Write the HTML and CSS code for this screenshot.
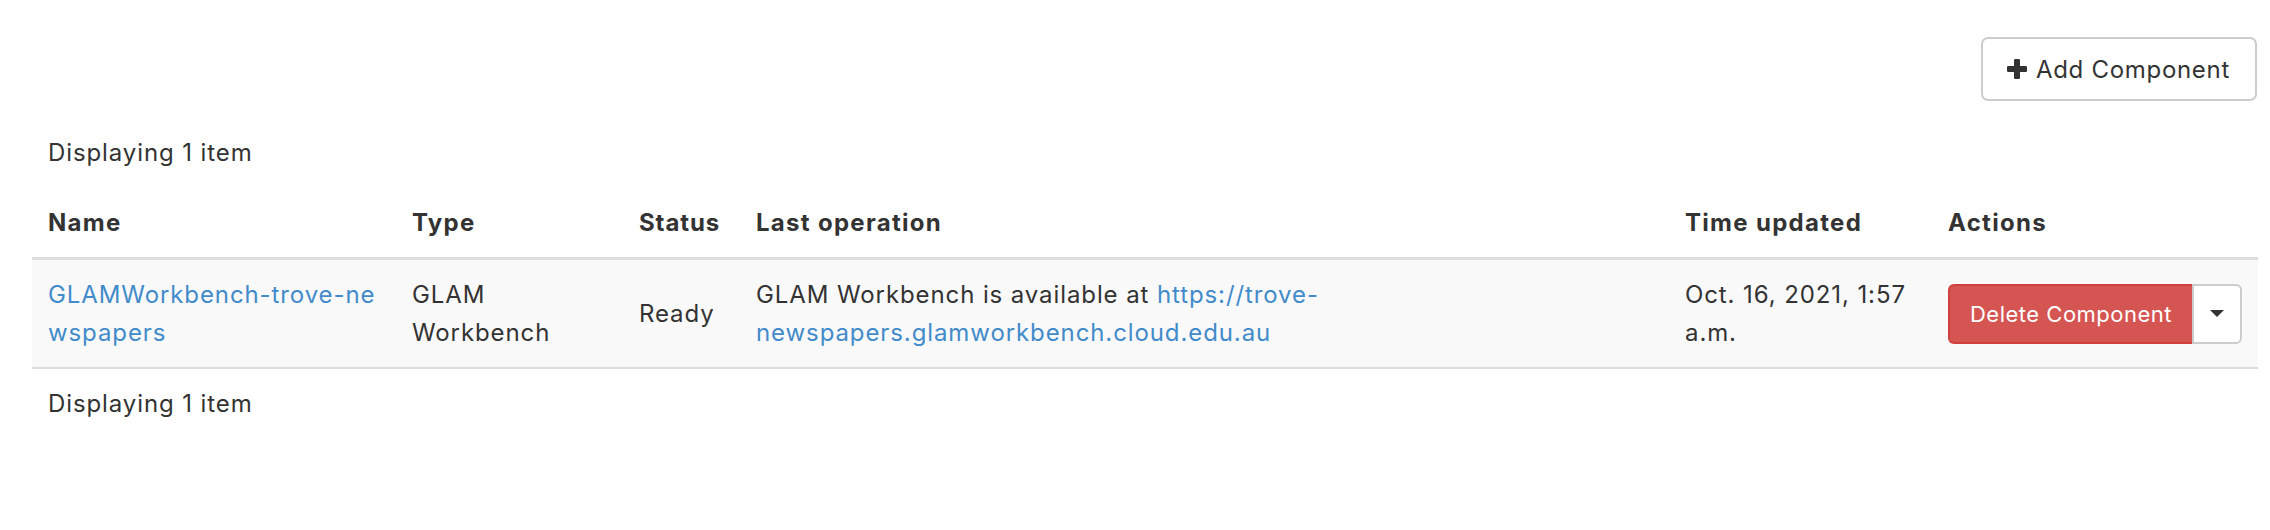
FILE: index.html
```html
<!DOCTYPE html>
<html lang="en">
<head>
<meta charset="utf-8">
<title>Components</title>
<link rel="stylesheet" href="styles.css">
</head>
<body>
<div class="page">
  <div class="toolbar">
    <button class="btn btn-default" type="button">
      <svg class="icon-plus" viewBox="0 0 20 20" width="20" height="20" aria-hidden="true"><rect x="7" y="0" width="6" height="20" rx="1.2"/><rect x="0" y="7" width="20" height="6" rx="1.2"/></svg>
      <span>Add Component</span>
    </button>
  </div>
  <div class="count">Displaying 1 item</div>
  <table class="table">
    <colgroup>
      <col class="c-name">
      <col class="c-type">
      <col class="c-status">
      <col class="c-op">
      <col class="c-time">
      <col class="c-actions">
    </colgroup>
    <thead>
      <tr>
        <th>Name</th>
        <th>Type</th>
        <th class="status">Status</th>
        <th>Last operation</th>
        <th>Time updated</th>
        <th>Actions</th>
      </tr>
    </thead>
    <tbody>
      <tr>
        <td class="name"><a href="#">GLAMWorkbench-trove-newspapers</a></td>
        <td>GLAM Workbench</td>
        <td>Ready</td>
        <td>GLAM Workbench is available at <a href="#">https://trove-newspapers.glamworkbench.cloud.edu.au</a></td>
        <td class="time"><span class="date">Oct. 16, 2021, 1:57</span> a.m.</td>
        <td>
          <div class="btn-group">
            <button class="btn btn-danger" type="button">Delete Component</button>
            <button class="btn btn-toggle" type="button" aria-label="More actions"><span class="caret"></span></button>
          </div>
        </td>
      </tr>
    </tbody>
  </table>
  <div class="count">Displaying 1 item</div>
</div>
</body>
</html>
```

FILE: styles.css
```css
html, body {
  margin: 0;
  padding: 0;
  background: #ffffff;
}

body {
  font-family: Inter, "Noto Sans", "Liberation Sans", sans-serif;
  font-size: 24px;
  line-height: 37.5px;
  letter-spacing: 0.9px;
  color: #333333;
}

.page {
  padding: 37px 12px 0 32px;
}

.toolbar {
  display: flex;
  justify-content: flex-end;
  padding-right: 1px;
}

.btn {
  font-family: inherit;
  letter-spacing: inherit;
  cursor: pointer;
  margin: 0;
}

.btn-default {
  display: inline-flex;
  align-items: center;
  gap: 9px;
  height: 64px;
  padding: 0 25px 0 24px;
  background: #ffffff;
  border: 2px solid #cccccc;
  border-radius: 7px;
  color: #333333;
  font-size: 24px;
  letter-spacing: 0.7px;
}

.icon-plus {
  fill: #333333;
  display: block;
}

.count {
  margin-top: 17px;
  padding: 16px 16px;
}

.table {
  width: 2226px;
  table-layout: fixed;
  border-collapse: collapse;
}

.c-name { width: 364px; }
.c-type { width: 227px; }
.c-status { width: 117px; }
.c-op { width: 929px; }
.c-time { width: 263px; }
.c-actions { width: 326px; }

.table th {
  text-align: left;
  font-weight: 700;
  letter-spacing: 1.3px;
  padding: 16px 16px;
  border-bottom: 3px solid #dddddd;
  vertical-align: bottom;
  white-space: nowrap;
}

.table th.status {
  letter-spacing: 0.9px;
  padding-right: 6px;
}

.table td {
  padding: 16px 16px;
  background: #f9f9f9;
  border-bottom: 2px solid #dddddd;
  vertical-align: middle;
}

.table td.name {
  word-break: break-all;
  padding-right: 10px;
}

.table td.time {
  padding-right: 8px;
}

.date {
  white-space: nowrap;
}

a {
  color: #428bca;
  text-decoration: none;
}

.table + .count {
  margin-top: 0;
}

.btn-group {
  display: inline-flex;
  height: 60px;
}

.btn-danger {
  height: 60px;
  width: 244px;
  padding: 0;
  background: #d55553;
  border: 2px solid #d0413e;
  border-right: none;
  border-radius: 6px 0 0 6px;
  color: #ffffff;
  font-size: 22px;
  letter-spacing: 0.5px;
}

.btn-toggle {
  height: 60px;
  width: 50px;
  padding: 0;
  background: #ffffff;
  border: 2px solid #cccccc;
  border-radius: 0 6px 6px 0;
  display: flex;
  align-items: center;
  justify-content: center;
}

.caret {
  display: block;
  width: 0;
  height: 0;
  border-left: 7px solid transparent;
  border-right: 7px solid transparent;
  border-top: 7px solid #333333;
}
```
